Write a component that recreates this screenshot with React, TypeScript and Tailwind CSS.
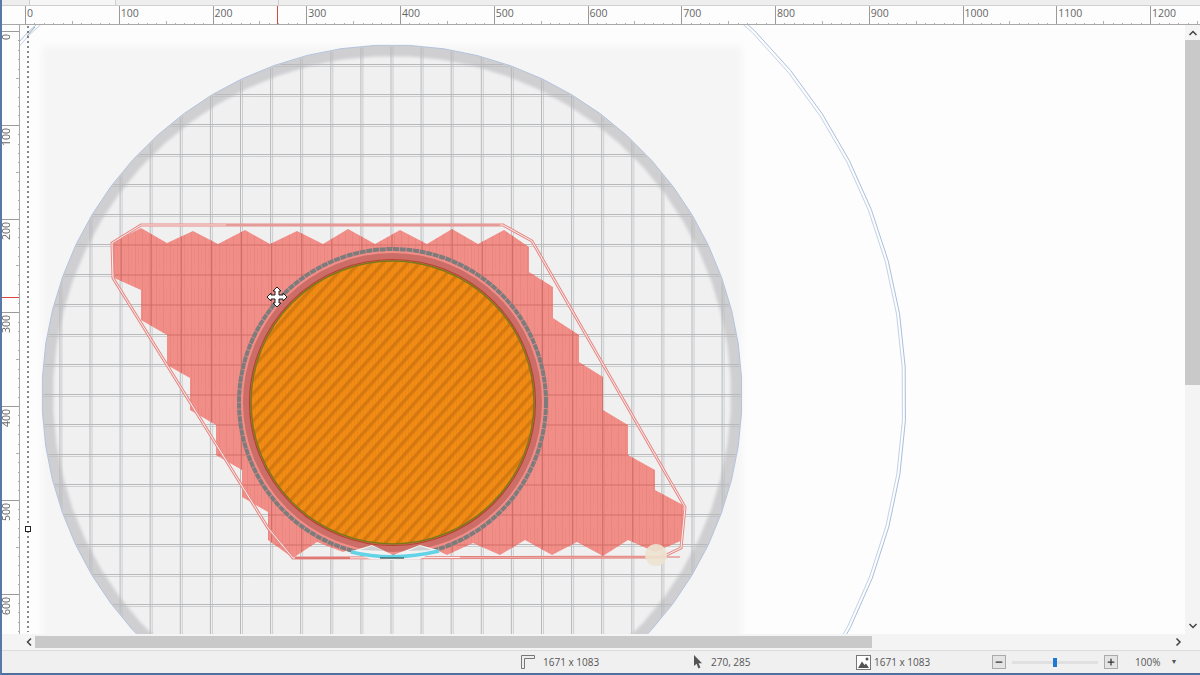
import { Minus, Plus } from "lucide-react";

const RULER_X = [0, 100, 200, 300, 400, 500, 600, 700, 800, 900, 1000, 1100, 1200];
const RULER_Y = [0, 100, 200, 300, 400, 500, 600];
const MINOR = [0, 1, 2, 3, 4, 5, 6, 7, 8, 9];

const gridX = Array.from({ length: 25 }, (_, i) => 392 + (i - 12) * 30.1);
const gridY = Array.from({ length: 23 }, (_, i) => 65 + i * 30);

// wafer outline is faceted in the picture, not a true circle
function ring(cx: number, cy: number, r: number, sides: number) {
  return Array.from({ length: sides }, (_, i) => {
    const a = (i / sides) * Math.PI * 2 + 0.05;
    return `${(cx + r * Math.cos(a)).toFixed(1)},${(cy + r * Math.sin(a)).toFixed(1)}`;
  }).join(" ");
}

const SALMON =
  "112,243 141,228 167,243 193,231 218,244 245,230 270,244 297,231 323,244 348,229 375,244 400,230 427,244 452,229 478,244 504,230 529,247 529,272 553,287 553,318 579,335 579,362 603,377 603,410 628,425 628,455 655,470 655,490 683,505 683,540 655,552 628,540 603,556 577,542 552,555 525,540 500,555 473,543 447,555 420,542 393,555 368,543 343,552 317,542 293,558 268,540 268,512 242,497 242,470 216,455 216,425 190,410 190,378 167,365 167,335 141,320 141,290 112,277";

const OUTLINE =
  "141,225 503,225 532,241 685,507 681,548 662,557 293,558 268,528 113,278 112,243";

function TopRuler() {
  return (
    <div className="relative flex h-[19px] shrink-0 overflow-hidden border-b border-[#a8a8a8] bg-[#fdfdfd] pl-[25px]">
      {RULER_X.map((n) => (
        <div key={n} className="flex h-full w-[93.75px] shrink-0 flex-col justify-between border-l border-[#9a9a9a]">
          <span className="pl-[1px] text-[10.5px] leading-[15px] text-[#666]">{n}</span>
          <div className="flex items-end">
            {MINOR.map((m) => (
              <div key={m} className={`w-[9.375px] shrink-0 border-r border-[#b0b0b0] ${m === 4 ? "h-[4px]" : "h-[2px]"}`} />
            ))}
          </div>
        </div>
      ))}
      <div className="absolute left-[277px] top-0 h-full w-px bg-[#d9483c]" />
    </div>
  );
}

function LeftRuler() {
  return (
    <div className="relative flex w-[20px] shrink-0 flex-col overflow-hidden border-r border-[#a8a8a8] bg-[#fdfdfd] pt-[6px]">
      {RULER_Y.map((n) => (
        <div key={n} className="flex h-[93.75px] shrink-0 justify-between border-t border-[#9a9a9a]">
          <span className="rotate-180 self-start pb-[2px] pl-[3px] text-[10.5px] leading-[13px] text-[#666] [writing-mode:vertical-rl]">{n}</span>
          <div className="flex flex-col items-end">
            {MINOR.map((m) => (
              <div key={m} className={`h-[9.375px] shrink-0 border-b border-[#b0b0b0] ${m === 4 ? "w-[4px]" : "w-[2px]"}`} />
            ))}
          </div>
        </div>
      ))}
      <div className="absolute left-0 top-[272px] h-px w-full bg-[#d9483c]" />
    </div>
  );
}

function Board() {
  return (
    <svg viewBox="20 25 1165 609" className="block h-[609px] w-[1165px]">
      <defs>
        <clipPath id="waferClip">
          <polygon points={ring(392, 395, 349, 64)} />
        </clipPath>
        <clipPath id="salmonClip">
          <polygon points={SALMON} />
        </clipPath>
        <filter id="soft">
          <feGaussianBlur stdDeviation="3" />
        </filter>
        <filter id="softer">
          <feGaussianBlur stdDeviation="1.5" />
        </filter>
        <pattern id="salmonFill" width="7" height="40" patternUnits="userSpaceOnUse">
          <rect width="7" height="40" fill="#f28e88" />
          <rect x="2" width="1" height="40" fill="#ea8680" />
          <rect x="5" y="8" width="1" height="22" fill="#ee8a84" />
        </pattern>
        <pattern id="orangeFill" width="9" height="9" patternUnits="userSpaceOnUse" patternTransform="rotate(-48)">
          <rect width="9" height="9" fill="#f28c14" />
          <rect width="9" height="3.5" fill="#d67810" />
        </pattern>
        <pattern id="orangeHatch" width="3" height="40" patternUnits="userSpaceOnUse">
          <rect width="1" height="40" fill="#c87412" opacity="0.18" />
        </pattern>
      </defs>

      <rect x="20" y="25" width="1165" height="609" fill="#fdfdfd" />
      <rect x="42" y="46" width="700" height="600" fill="#f5f5f6" filter="url(#soft)" />

      {/* large outer outline */}
      <polygon points={ring(392, 395, 514, 60)} fill="none" stroke="#a9bfdc" strokeWidth="1" />
      <polygon points={ring(392, 395, 511, 60)} fill="none" stroke="#c3d2e6" strokeWidth="1" />

      {/* wafer */}
      <polygon points={ring(392, 395, 350, 64)} fill="#cfcfd2" stroke="#b4c3dc" strokeWidth="1" />
      <polygon points={ring(392, 395, 339, 64)} fill="#f0f0f1" filter="url(#softer)" />
      <g clipPath="url(#waferClip)">
        {gridX.map((x) => (
          <g key={x} stroke="#b8b9bb" strokeWidth="1">
            <line x1={x - 1} y1="30" x2={x - 1} y2="640" />
            <line x1={x + 1} y1="30" x2={x + 1} y2="640" opacity="0.6" />
          </g>
        ))}
        {gridY.map((y) => (
          <g key={y} stroke="#b8b9bb" strokeWidth="1">
            <line x1="30" y1={y - 0.5} x2="750" y2={y - 0.5} />
            <line x1="30" y1={y + 1.5} x2="750" y2={y + 1.5} opacity="0.6" />
          </g>
        ))}
      </g>

      {/* copper area */}
      <polygon points={SALMON} fill="url(#salmonFill)" />
      <g clipPath="url(#salmonClip)" stroke="#cf6f69" strokeWidth="1.2">
        {gridX.map((x) => (
          <line key={x} x1={x} y1="220" x2={x} y2="565" />
        ))}
        {gridY.map((y) => (
          <line key={y} x1="100" y1={y} x2="700" y2={y} />
        ))}
      </g>
      <polygon points={OUTLINE} fill="none" stroke="#e58b87" strokeWidth="3" />
      <polygon points={OUTLINE} fill="none" stroke="#fbeeee" strokeWidth="1" />
      <line x1="226" y1="225" x2="500" y2="225" stroke="#d97a74" strokeWidth="1" />
      <line x1="295" y1="558" x2="350" y2="558" stroke="#d9625c" strokeWidth="1.5" />
      <line x1="460" y1="557" x2="680" y2="557" stroke="#e0716b" strokeWidth="1.2" />

      {/* pad */}
      <circle cx="392.5" cy="402.5" r="153.5" fill="#f28e88" stroke="#7c7c7c" strokeWidth="4" strokeDasharray="6 0.7" />
      <circle cx="392.5" cy="402.5" r="149.5" fill="#cd6d68" />
      <circle cx="392.5" cy="402.5" r="141" fill="url(#orangeFill)" />
      <circle cx="392.5" cy="402.5" r="141" fill="url(#orangeHatch)" />
      <circle cx="392.5" cy="402.5" r="143" fill="none" stroke="#b8402f" strokeWidth="1.2" />
      <circle cx="392.5" cy="402.5" r="141.5" fill="none" stroke="#7c7a14" strokeWidth="1.5" />

      {/* bottom cut of the ring */}
      <polygon points="352,551 372,545 393,555 420,545 438,550 420,559 393,560 370,559" fill="#f2f2f3" />
      <polygon points="360,550 372,546 384,551" fill="#cfcfd2" />
      <polygon points="408,551 420,546 432,550" fill="#cfcfd2" />
      <path d="M351 552 Q393 562 439 551" fill="none" stroke="#63d3e6" strokeWidth="3.5" />
      <line x1="380" y1="558" x2="404" y2="558" stroke="#333" strokeWidth="1" />

      <circle cx="656" cy="555" r="11" fill="#ede2cf" opacity="0.9" />

      {/* origin marker */}
      <line x1="28" y1="26" x2="28" y2="632" stroke="#111" strokeWidth="1" strokeDasharray="2 3" />
      <rect x="25.5" y="526.5" width="5" height="5" fill="#fff" stroke="#222" strokeWidth="1" />
      <line x1="27" y1="36" x2="35" y2="27" stroke="#9aa" strokeWidth="1" />

      {/* move cursor */}
      <polygon
        points="277,287 281,291 279,291 279,295 283,295 283,293 287,297 283,301 283,299 279,299 279,303 281,303 277,307 273,303 275,303 275,299 271,299 271,301 267,297 271,293 271,295 275,295 275,291 273,291"
        fill="#fff"
        stroke="#222"
        strokeWidth="1"
      />
    </svg>
  );
}

function CanvasSizeIcon() {
  return (
    <svg width="14" height="14" viewBox="0 0 14 14" fill="none" stroke="#777" strokeWidth="1">
      <path d="M0.5 13.5V0.5H13.5V3.5H3.5V13.5Z" fill="#eee" />
    </svg>
  );
}

function PointerIcon() {
  return (
    <svg width="10" height="14" viewBox="0 0 10 14">
      <path d="M1 0V11L3.6 8.8 5.4 13.5 7.4 12.6 5.6 8.2H9Z" fill="#555" />
    </svg>
  );
}

function ImageIcon() {
  return (
    <svg width="15" height="15" viewBox="0 0 15 15">
      <rect x="0.5" y="0.5" width="14" height="14" fill="#fff" stroke="#777" />
      <path d="M2 13L6 6.5 8.5 10 10 8.5 13 13Z" fill="#555" />
      <circle cx="11" cy="4" r="1.5" fill="#555" />
    </svg>
  );
}

export default function App() {
  return (
    <div className="flex h-[675px] w-[1200px] flex-col overflow-hidden border-l-2 border-[#5878a8] bg-[#f0f0f0] font-['Open_Sans','Liberation_Sans',sans-serif]">
      {/* tab strip, only the bottom edge is in frame */}
      <div className="flex h-[6px] shrink-0 border-b border-[#cfcfcf] bg-[#eeeeee] pl-[27px]">
        <div className="h-full w-[87px] border-x border-[#cfcfcf] bg-[#f6f6f6]" />
        <div className="h-full w-[163px] border-r border-[#cfcfcf]" />
      </div>
      <div className="ml-[-2px]">
        <TopRuler />
      </div>

      <div className="ml-[-2px] flex h-[609px] shrink-0">
        <LeftRuler />
        <Board />
        {/* vertical scrollbar */}
        <div className="flex w-[15px] shrink-0 flex-col items-center bg-[#f4f4f4]">
          <svg width="10" height="15" viewBox="0 0 10 15" fill="none" stroke="#444" strokeWidth="1.5">
            <path d="M1.5 10L5 6.5 8.5 10" />
          </svg>
          <div className="h-[345px] w-full bg-[#c9c9c9]" />
          <div className="flex-1" />
          <svg width="10" height="15" viewBox="0 0 10 15" fill="none" stroke="#444" strokeWidth="1.5">
            <path d="M1.5 5L5 8.5 8.5 5" />
          </svg>
        </div>
      </div>

      {/* horizontal scrollbar */}
      <div className="flex h-[16px] shrink-0 items-center bg-[#f4f4f4] pl-[20px] pr-[15px]">
        <svg width="13" height="16" viewBox="0 0 13 16" fill="none" stroke="#444" strokeWidth="1.5" className="shrink-0">
          <path d="M9 4.5L5.5 8 9 11.5" />
        </svg>
        <div className="h-[12px] w-[837px] bg-[#c9c9c9]" />
        <div className="flex-1" />
        <svg width="13" height="16" viewBox="0 0 13 16" fill="none" stroke="#444" strokeWidth="1.5" className="shrink-0">
          <path d="M4.5 4.5L8 8 4.5 11.5" />
        </svg>
      </div>

      {/* status bar */}
      <div className="flex h-[25px] shrink-0 items-center border-b-2 border-t border-b-[#4f6f9c] border-t-[#dcdcdc] bg-[#f0f0f0] text-[10px] text-[#555]">
        <div className="ml-[519px] flex w-[169px] items-center gap-2">
          <CanvasSizeIcon />
          <span>1671 x 1083</span>
        </div>
        <div className="flex w-[166px] items-center gap-[8px] pl-[3px]">
          <PointerIcon />
          <span>270, 285</span>
        </div>
        <div className="flex w-[136px] items-center gap-[3px]">
          <ImageIcon />
          <span>1671 x 1083</span>
        </div>
        <button className="flex h-[14px] w-[14px] items-center justify-center border border-[#aaa] bg-[#e4e4e4]">
          <Minus size={10} strokeWidth={3} color="#333" />
        </button>
        <div className="mx-[6px] flex h-[14px] w-[86px] items-center justify-center">
          <div className="relative h-[3px] w-full bg-[#e0e0e0]">
            <div className="absolute left-[41px] top-[-3px] h-[9px] w-[4px] bg-[#1f78d1]" />
          </div>
        </div>
        <button className="flex h-[14px] w-[14px] items-center justify-center border border-[#aaa] bg-[#e4e4e4]">
          <Plus size={10} strokeWidth={3} color="#333" />
        </button>
        <span className="ml-[17px]">100%</span>
        <span className="ml-[10px] text-[7px]">▼</span>
      </div>
    </div>
  );
}
